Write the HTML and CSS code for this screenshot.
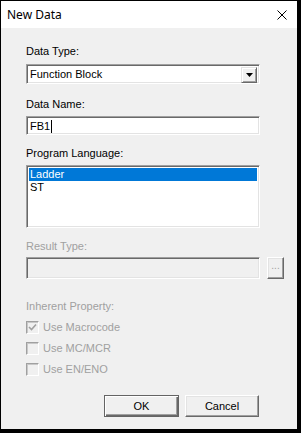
FILE: index.html
```html
<!DOCTYPE html>
<html lang="en">
<head>
    <meta charset="UTF-8">
    <title>New Data</title>
    <link rel="stylesheet" href="styles.css">
</head>
<body>
<div class="dialog">
    <div class="titlebar">
        <span class="title">New Data</span>
        <svg class="close" width="10" height="10" viewBox="0 0 10 10">
            <path d="M0.5 0.5 L9.5 9.5 M9.5 0.5 L0.5 9.5" stroke="#000" stroke-width="1" fill="none"/>
        </svg>
    </div>
    <div class="content">
        <div class="label first">Data Type:</div>
        <div class="combo sunken">
            <span class="combo-text">Function Block</span>
            <span class="combo-btn">
                <svg width="7" height="4" viewBox="0 0 7 4"><path d="M0 0 H7 L3.5 4 Z" fill="#000"/></svg>
            </span>
        </div>

        <div class="label name-label">Data Name:</div>
        <div class="edit sunken">FB1<span class="caret"></span></div>

        <div class="label lang-label">Program Language:</div>
        <div class="listbox sunken">
            <div class="item selected">Ladder</div>
            <div class="item">ST</div>
        </div>

        <div class="label disabled result-label">Result Type:</div>
        <div class="result-row">
            <div class="edit-disabled sunken"></div>
            <div class="browse">...</div>
        </div>

        <div class="label disabled prop-label">Inherent Property:</div>
        <div class="checks">
            <div class="check-row">
                <span class="checkbox">
                    <svg width="9" height="9" viewBox="0 0 9 9"><path d="M1 4 L3.5 6.5 L8 1.5" stroke="#a0a0a0" stroke-width="1.6" fill="none"/></svg>
                </span>
                <span class="check-text">Use Macrocode</span>
            </div>
            <div class="check-row">
                <span class="checkbox"></span>
                <span class="check-text">Use MC/MCR</span>
            </div>
            <div class="check-row">
                <span class="checkbox"></span>
                <span class="check-text">Use EN/ENO</span>
            </div>
        </div>

        <div class="buttons">
            <button class="btn default">OK</button>
            <button class="btn cancel">Cancel</button>
        </div>
    </div>
</div>
</body>
</html>
```
FILE: styles.css
```css
body {
    margin: 0;
    background: #000;
    font-family: "Liberation Sans", Arial, sans-serif;
    font-size: 11px;
    color: #000;
}
.dialog {
    margin: 1px 0 0 1px;
    width: 296px;
    height: 428px;
    background: #f0f0f0;
}
.titlebar {
    height: 27px;
    background: #fff;
    display: flex;
    align-items: center;
    justify-content: space-between;
    padding: 0 10px 0 6px;
}
.title {
    font-family: "Noto Sans", sans-serif;
    font-size: 12px;
    line-height: 27px;
    color: #000;
}
.content {
    padding: 0 37px 0 25px;
}
.label {
    line-height: 13px;
    height: 13px;
}
.label.first { margin-top: 17px; }
.name-label { margin-top: 14px; }
.lang-label { margin-top: 12px; }
.result-label { margin-top: 12px; }
.prop-label { margin-top: 21px; }
.disabled {
    color: #a0a0a0;
}
.sunken {
    box-sizing: border-box;
    border: 1px solid;
    border-color: #a0a0a0 #fff #fff #a0a0a0;
    box-shadow: inset 1px 1px #696969, inset -1px -1px #e3e3e3;
}
.combo {
    margin-top: 6px;
    height: 20px;
    background: #fff;
    display: flex;
    justify-content: space-between;
    padding: 2px;
}
.combo-text {
    line-height: 13px;
    padding: 1px 0 0 1px;
}
.combo-btn {
    width: 16px;
    height: 16px;
    box-sizing: border-box;
    background: #f0f0f0;
    border: 1px solid;
    border-color: #e3e3e3 #696969 #696969 #e3e3e3;
    box-shadow: inset 1px 1px #fff, inset -1px -1px #a0a0a0;
    display: flex;
    align-items: center;
    justify-content: center;
}
.edit {
    margin-top: 5px;
    height: 19px;
    background: #fff;
    padding: 2px 3px 0;
    line-height: 13px;
    display: flex;
    align-items: center;
}
.caret {
    display: inline-block;
    width: 1px;
    height: 13px;
    background: #000;
    margin-left: 1px;
}
.listbox {
    margin-top: 5px;
    height: 63px;
    background: #fff;
    padding: 2px;
}
.item {
    line-height: 13px;
    height: 13px;
    padding-left: 1px;
}
.item.selected {
    background: #0078d7;
    color: #fff;
}
.result-row {
    margin-top: 4px;
    margin-right: -24px;
    display: flex;
    gap: 7px;
    height: 22px;
}
.edit-disabled {
    flex: none;
    width: 234px;
    height: 22px;
    background: #f0f0f0;
}
.browse {
    flex: none;
    width: 17px;
    height: 22px;
    box-sizing: border-box;
    border: 1px solid;
    border-color: #fff #696969 #696969 #fff;
    box-shadow: inset -1px -1px #a0a0a0, inset 1px 1px #e3e3e3;
    color: #a0a0a0;
    font-size: 10px;
    line-height: 16px;
    text-align: center;
}
.checks {
    margin-top: 8px;
    display: flex;
    flex-direction: column;
    gap: 8px;
}
.check-row {
    display: flex;
    align-items: center;
    height: 13px;
    color: #a0a0a0;
}
.checkbox {
    box-sizing: border-box;
    width: 13px;
    height: 13px;
    border: 1px solid;
    border-color: #a0a0a0 #fff #fff #a0a0a0;
    box-shadow: inset 1px 1px #c8c8c8;
    background: #f0f0f0;
    display: flex;
    align-items: center;
    justify-content: center;
}
.check-text {
    margin-left: 4px;
    line-height: 13px;
}
.buttons {
    margin-top: 19px;
    display: flex;
    justify-content: flex-end;
    gap: 6px;
    padding-right: 1px;
}
.btn {
    font-family: "Liberation Sans", Arial, sans-serif;
    font-size: 11px;
    height: 22px;
    background: #f0f0f0;
    color: #000;
    padding: 0;
    box-sizing: border-box;
    border: 1px solid;
}
.btn.default {
    width: 75px;
    border-color: #646464;
    box-shadow: inset 1px 1px #fff, inset -1px -1px #696969, inset -2px -2px #a0a0a0;
}
.btn.cancel {
    width: 74px;
    border-color: #fff #696969 #696969 #fff;
    box-shadow: inset -1px -1px #a0a0a0, inset 1px 1px #e3e3e3;
}
```
